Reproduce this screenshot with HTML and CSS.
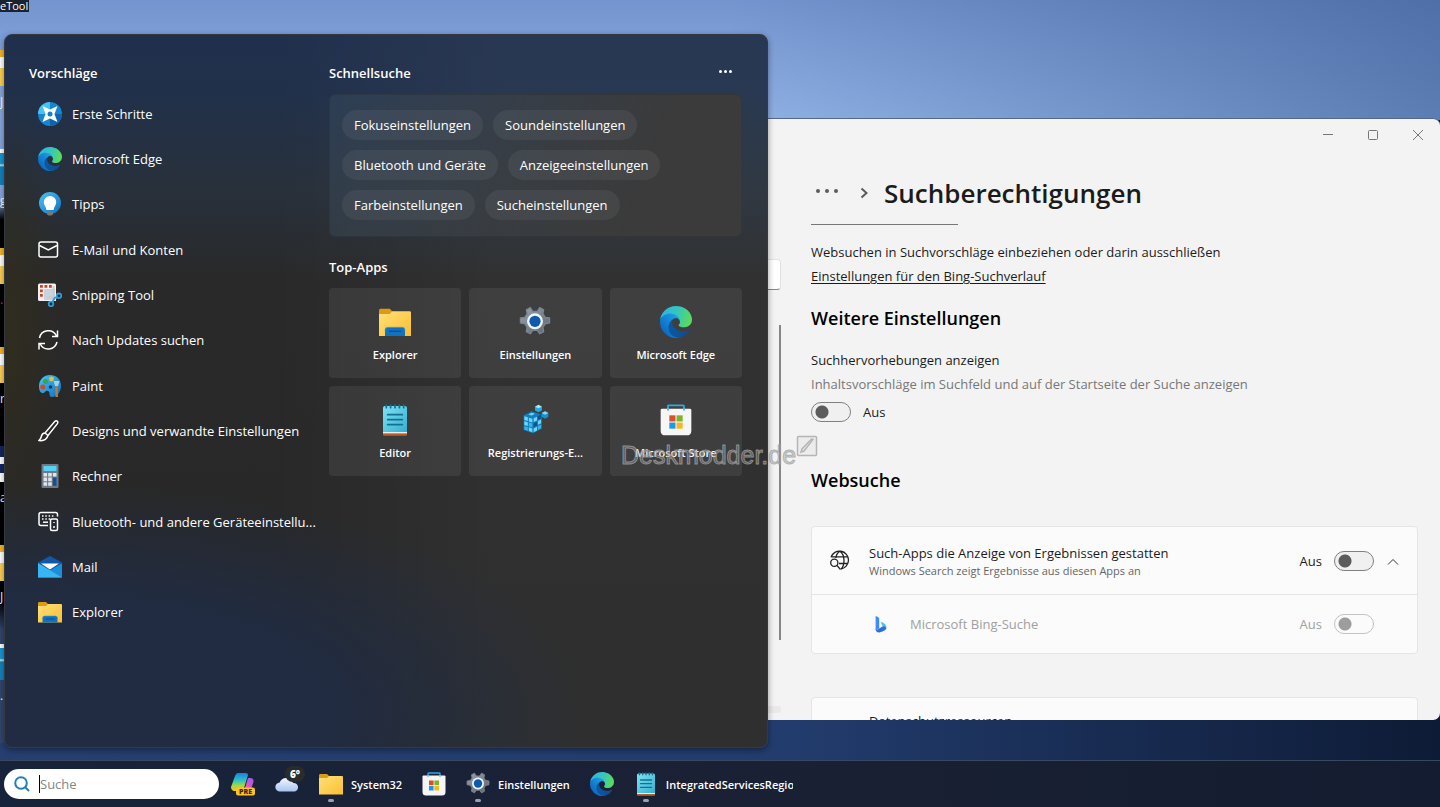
FILE: index.html
```html
<!DOCTYPE html>
<html lang="de">
<head>
  <meta charset="utf-8">
  <title>Suche</title>
  <link rel="stylesheet" href="styles.css">
</head>
<body>
  <!-- shared icons -->
  <svg class="sprite" aria-hidden="true">
    <defs>
      <linearGradient id="edge-a" x1="0" y1="0" x2="1" y2="0"><stop offset="0" stop-color="#0c59a4"/><stop offset="1" stop-color="#114a8b"/></linearGradient>
      <linearGradient id="edge-b" x1="0.9" y1="0.3" x2="0.2" y2="1"><stop offset="0" stop-color="#1b9de2"/><stop offset="0.5" stop-color="#1280d4"/><stop offset="1" stop-color="#0a5fb8"/></linearGradient>
      <linearGradient id="edge-c" x1="0" y1="0.4" x2="1" y2="0.6"><stop offset="0" stop-color="#2fb4e4"/><stop offset="0.5" stop-color="#35c6bd"/><stop offset="1" stop-color="#5fdc53"/></linearGradient>
      <linearGradient id="folder-g" x1="0" y1="0" x2="1" y2="1"><stop offset="0" stop-color="#ffe07a"/><stop offset="1" stop-color="#fcbf2f"/></linearGradient>
      <linearGradient id="blue-g" x1="0" y1="0" x2="1" y2="1"><stop offset="0" stop-color="#4bc4f5"/><stop offset="1" stop-color="#0f6fc2"/></linearGradient>
      <linearGradient id="note-g" x1="0" y1="0" x2="1" y2="1"><stop offset="0" stop-color="#7fe3f5"/><stop offset="1" stop-color="#35aed0"/></linearGradient>
      <linearGradient id="cop-a" x1="0" y1="0" x2="0" y2="1"><stop offset="0" stop-color="#1b7fe0"/><stop offset="0.4" stop-color="#2bc1c9"/><stop offset="0.7" stop-color="#a4d840"/><stop offset="1" stop-color="#fcc419"/></linearGradient>
      <linearGradient id="cop-b" x1="1" y1="0" x2="0" y2="1"><stop offset="0" stop-color="#8a5cf0"/><stop offset="0.5" stop-color="#e057c0"/><stop offset="1" stop-color="#ff8a50"/></linearGradient>
      <linearGradient id="cloud-g" x1="0" y1="0" x2="0" y2="1"><stop offset="0" stop-color="#f2f7ff"/><stop offset="1" stop-color="#a9c4f0"/></linearGradient>
      <linearGradient id="gear-g" x1="0" y1="0" x2="1" y2="1"><stop offset="0" stop-color="#9aa4ae"/><stop offset="1" stop-color="#5c6670"/></linearGradient>
    </defs>
    <symbol id="edge" viewBox="4.63 4.92 256 256">
      <path fill="url(#edge-a)" d="M235.68 195.46a93.73 93.73 0 0 1-10.54 4.71 101.87 101.87 0 0 1-35.9 6.46c-47.32 0-88.54-32.55-88.54-74.32A31.48 31.48 0 0 1 117.13 105c-42.8 1.8-53.8 46.4-53.8 72.53 0 73.88 68.09 81.37 82.76 81.37 7.91 0 19.84-2.3 27-4.56l1.31-.44a128.34 128.34 0 0 0 66.6-52.8 4 4 0 0 0-5.32-5.64z"/>
      <path fill="url(#edge-b)" d="M110.34 246.34A79.2 79.2 0 0 1 87.6 225a80.72 80.72 0 0 1 29.53-120c3.12-1.47 8.45-4.13 15.54-4a32.35 32.35 0 0 1 25.69 13 31.88 31.88 0 0 1 6.36 18.66c0-.21 24.46-79.6-80-79.6-43.9 0-80 41.66-80 78.21a130.15 130.15 0 0 0 12.11 56 128 128 0 0 0 156.38 67.11 75.55 75.55 0 0 1-62.78-8z"/>
      <path fill="url(#edge-c)" d="M156.94 153.78c-.81 1.05-3.3 2.5-3.3 5.66 0 2.61 1.7 5.12 4.72 7.23 14.38 10 41.49 8.68 41.56 8.68a59.56 59.56 0 0 0 30.27-8.35 61.38 61.38 0 0 0 30.43-52.88c.26-22.41-8-37.31-11.34-43.91C228.09 28.76 182.35 4.92 132.61 4.92a128 128 0 0 0-128 126.2c.48-36.54 36.8-66.05 80-66.05 3.5 0 23.46.34 42 10.07 16.34 8.58 24.9 18.94 30.85 29.21 6.18 10.67 7.28 24.15 7.28 29.52s-2.74 13.33-7.8 19.91z"/>
    </symbol>
    <symbol id="folder" viewBox="0 0 24 24">
      <path fill="#dd9b12" d="M0 8V3.200q0-1.200 1.200-1.200H8l2.500 2.500V8z"/>
      <path fill="url(#folder-g)" d="M0 6h8l2-2h13q1 0 1 1v17.500H0z"/>
    </symbol>
    <symbol id="explorer" viewBox="0 0 24 24">
      <use href="#folder"/>
      <path fill="#1173c0" d="M4.500 22.500V18q0-2 2-2h11q2 0 2 2v4.500z"/>
      <path stroke="#0a4f8f" d="M7.500 19h9"/>
      <path fill="none" stroke="#3b9be0" stroke-width=".6" d="M4.500 18.500q0-2.500 2-2.500h11q2 0 2 2.500"/>
    </symbol>
    <symbol id="gear" viewBox="0 0 24 24">
      <path fill="url(#gear-g)" stroke="#7b858f" stroke-linejoin="round" d="M8.500 1.200L10.200 4h3.600l1.700-2.800 3 1.600-.6 3.200 1.800 2.600 3.200.4v3.700l-3.200.6-1.800 2.700.6 3.200-3 1.600-1.700-2.600h-3.600l-1.700 2.600-3-1.600.6-3.200-1.800-2.700-3.200-.6V9l3.200-.4L6.100 6l-.6-3.200z"/>
      <circle cx="12" cy="11.500" r="6" fill="#eef4fa"/>
      <circle cx="12" cy="11.500" r="4.200" fill="#0f58b0"/>
    </symbol>
    <symbol id="store" viewBox="0 0 24 24">
      <path fill="none" stroke="#31a8e0" stroke-width="1.400" d="M6 5V1.600q0-.6.600-.6h10.800q.6 0 .6.600V5"/>
      <path fill="#f6f6f6" d="M.5 4.500q0-1 1-1h21q1 0 1 1V20q0 3.500-3.500 3.500H4Q.5 23.500.5 20z"/>
      <path fill="none" stroke="#31a8e0" stroke-width="1.200" d="M6 3.500v1.300M18 3.500v1.300"/>
      <path fill="#d9502e" d="M7 8.500h4.600v4.600H7z"/><path fill="#7db52a" d="M12.400 8.500H17v4.600h-4.600z"/>
      <path fill="#1e9be0" d="M7 13.900h4.600v4.600H7z"/><path fill="#f7b81c" d="M12.400 13.900H17v4.600h-4.600z"/>
    </symbol>
    <symbol id="notepad" viewBox="0 0 24 24">
      <path fill="#b5622a" d="M3 20h18v3q0 .8-.8.800H3.800Q3 23.800 3 23z"/>
      <path fill="#eee" d="M3 18h18v4H3z"/>
      <path fill="url(#note-g)" d="M3 3q0-1.500 1.500-1.500h15Q21 1.500 21 3v18H3z"/>
      <path stroke="#15708f" stroke-width="1.300" stroke-linecap="round" d="M6.500 8h11M6.500 11.700h11M6.500 15.400h11M5.500.8v2M8.700.8v2M12 .8v2M15.300.8v2M18.500.8v2"/>
    </symbol>
    <symbol id="regedit" viewBox="0 0 24 24">
      <path fill="#127fbd" d="M3.500 8.500l6-3 7.500 2.500v10.500l-6.500 3.500-7-2.500z"/>
      <path fill="#6fd6fa" d="M4 9.200l2.600.8v2.800L4 12zM7.400 10.300l2.600.8v2.800l-2.600-.8zM4 12.900l2.600.8v2.800l-2.600-.8zM7.400 17.500l2.600.8v2.800l-2.600-.8zM11 18.300l2.500-1.200v2.800L11 21.200zM14.200 12.800l2.400-1.200v2.800l-2.400 1.200zM11 10.700l2.500-1.200v2.800L11 13.500zM7 7.800l2.500-1.200 2.500.8-2.500 1.200z"/>
      <path fill="#39b4e8" d="M4 16.700l2.600.8v2.600L4 19.300zM7.400 13.900l2.600.8v2.800l-2.600-.8zM14.200 16.700l2.400-1.200v2.600l-2.400 1.200z"/>
      <path fill="#0a5288" d="M11 14.500l2.500-1.200v2.800L11 17.300zM14.200 9l2.400-1.200v2.800l-2.400 1.200z"/>
      <path fill="#2ca8de" d="M12 2l2.600-1.500L17.200 2v2.800l-2.600 1.300L12 4.800z"/>
      <path fill="#a3e9ff" d="M12 2l2.600-1.500L17.200 2l-2.600 1.200z"/>
      <path fill="#1b8fca" d="M17 6.800l2.600-1.300 2.400 1.300v2.700L19.500 11 17 9.500z"/>
      <path fill="#7edbfa" d="M17 6.800l2.600-1.300L22 6.800 19.500 8z"/>
    </symbol>
  </svg>

  <div class="desktop">
    <main class="workspace">
      <span class="desktop-label">eTool</span>
      <div class="desktop-icons">
        <div class="shortcut"><i class="sliver sliver-folder"></i><span>J</span></div>
        <div class="shortcut"><i class="sliver sliver-reg"></i><span>g</span></div>
        <div class="shortcut"><i class="sliver sliver-folder"></i><span class="red">.</span></div>
        <div class="shortcut"><i class="sliver sliver-folder"></i><span>r</span></div>
        <div class="shortcut"><i class="sliver sliver-navy"></i><span>a</span></div>
        <div class="shortcut"><i class="sliver sliver-folder"></i><span>J</span></div>
        <div class="shortcut"><i class="sliver sliver-reg"></i><span>.</span></div>
      </div>

      <section class="window">
        <aside class="sidebar">
          <input class="settings-search" type="text" aria-label="Einstellung suchen">
          <div class="scroll-thumb"></div>
          <div class="scroll-end"></div>
        </aside>
        <div class="content">
          <div class="titlebar">
            <button aria-label="Minimieren"><svg viewBox="0 0 10 10"><path d="M0 4.500h10"/></svg></button>
            <button aria-label="Maximieren"><svg viewBox="0 0 10 10"><rect x=".5" y=".5" width="9" height="9" rx="1"/></svg></button>
            <button aria-label="Schließen"><svg viewBox="0 0 10 10"><path d="M0 0l10 10M10 0L0 10"/></svg></button>
          </div>
          <div class="page">
            <div class="breadcrumb">
              <button class="crumb-more" aria-label="Mehr"><i></i><i></i><i></i></button>
              <svg class="crumb-arrow" viewBox="0 0 8 12"><path d="M1.500 1.500L6.500 6l-5 4.500"/></svg>
              <h1>Suchberechtigungen</h1>
            </div>
            <hr class="short-line">
            <p class="line">Websuchen in Suchvorschläge einbeziehen oder darin ausschließen</p>
            <p class="line"><a href="#">Einstellungen für den Bing-Suchverlauf</a></p>
            <h2>Weitere Einstellungen</h2>
            <label class="line block" for="highlights">Suchhervorhebungen anzeigen</label>
            <p class="line muted">Inhaltsvorschläge im Suchfeld und auf der Startseite der Suche anzeigen</p>
            <div class="toggle-row"><input class="toggle" type="checkbox" id="highlights"><span>Aus</span></div>
            <h2 class="web">Websuche</h2>
            <div class="card">
              <div class="card-row">
                <svg class="globe" viewBox="0 0 21 21"><path d="M2 7.200A9 9 0 1 1 12 19M10.800 1.200Q7 4 6.900 8M10.800 1.200Q15 4 15 10.200T12 19M2.500 6.800h16.500M10 13.500h9"/><circle cx="5.300" cy="12.800" r="3.600"/><path d="M7.900 15.400L11.500 19.500"/></svg>
                <div class="card-text">
                  <label for="apps">Such-Apps die Anzeige von Ergebnissen gestatten</label>
                  <small>Windows Search zeigt Ergebnisse aus diesen Apps an</small>
                </div>
                <span>Aus</span>
                <input class="toggle" type="checkbox" id="apps">
                <button class="expand" aria-label="Einklappen"><svg viewBox="0 0 12 8"><path d="M1 6.500l5-5 5 5"/></svg></button>
              </div>
              <div class="card-row sub">
                <svg class="bing" viewBox="0 0 14 20"><path fill="#3f8df0" d="M1 1q3.500.5 4 3v11l-4 2z"/><path fill="#4fc0f0" d="M6.500 7.500q7 2 6.500 7.500l-4.500-3z"/><path fill="#2a6ee0" d="M1 15.500q1 2 4-.5l4-2.500q3-.5 4 2.500-1 2.500-7 4.300Q1.500 20 1 15.500z"/></svg>
                <label class="card-text" for="bing">Microsoft Bing-Suche</label>
                <span>Aus</span>
                <input class="toggle" type="checkbox" id="bing" disabled>
              </div>
            </div>
            <div class="card next"><div class="card-row resources">Datenschutzressourcen</div></div>
          </div>
        </div>
      </section>

      <section class="search-panel">
        <div class="suggestions">
          <h3>Vorschläge</h3>
          <ul>
            <li><button><svg viewBox="0 0 24 24"><circle cx="12" cy="12" r="12" fill="#1687cf"/><path fill="#46c0f5" d="M12 0a12 12 0 0 0-12 12h12z"/><path fill="#0e65ad" d="M12 24a12 12 0 0 0 12-12H12z"/><path fill="#fff" d="M4.500 4L12 7.500 19.500 4 16.500 12l3 8L12 16.500 4.500 20l3-8z"/><circle cx="12" cy="12" r="2.500" fill="#1580c8"/></svg>Erste Schritte</button></li>
            <li><button><svg><use href="#edge"/></svg>Microsoft Edge</button></li>
            <li><button><svg viewBox="0 0 24 24"><circle cx="12" cy="11" r="11" fill="url(#blue-g)"/><path fill="#fff" d="M12 4a6.200 6.200 0 0 1 6.200 6.200c0 3-2.200 4.300-2.700 7.800h-7c-.5-3.500-2.700-4.800-2.700-7.800A6.200 6.200 0 0 1 12 4z"/><path fill="#777" d="M9 19h6v2.500q0 2-3 2t-3-2z"/></svg>Tipps</button></li>
            <li><button><svg class="line-icon" viewBox="0 0 24 24"><rect x="1" y="4" width="18.500" height="15" rx="2"/><path d="M1.500 7.500l8.800 4.500L19 7.500"/></svg>E-Mail und Konten</button></li>
            <li><button><svg viewBox="0 0 24 24"><path fill="#f2f2f2" d="M0 2Q0 .5 1.500.5h15Q18 .5 18 2v16H1.500Q0 18 0 16.500z"/><path fill="#c9d3dc" d="M6 6h11v11H6z"/><path fill="#cf3f25" d="M2 2h2.800v2.800H2zM6.500 2h2.800v2.800H6.500zM11 2h2.800v2.800H11zM2 6.500h2.800v2.800H2zM2 11h2.800v2.800H2z"/><path stroke="#c8ccd0" stroke-width="1.800" d="M15.500 3v13M9 14.500h10"/><g fill="none" stroke="#2d9be0" stroke-width="1.800"><circle cx="13" cy="21" r="2.300"/><circle cx="21" cy="12.800" r="2.300"/><path d="M14.500 19l2-4 2.700-1"/></g></svg>Snipping Tool</button></li>
            <li><button><svg class="line-icon" viewBox="0 0 24 24"><path d="M1.500 10A9 9 0 0 1 18.500 8M19.500 2.500V8.500H14M19 14A9 9 0 0 1 2.200 16M1 21.500v-6H7"/></svg>Nach Updates suchen</button></li>
            <li><button><svg viewBox="0 0 24 24"><path fill="url(#blue-g)" d="M12 1c6 0 11 4 11 10.500S19 23 14 23c-4 0-1-5-4-6s-3 3-6 2c-2.500-1-3-4-3-7C1 5.500 6 1 12 1z"/><circle cx="4.700" cy="13" r="2.500" fill="#c84d28"/><circle cx="7.500" cy="7.500" r="2.500" fill="#3da345"/><circle cx="13.500" cy="5" r="2.400" fill="#e8c22e"/><circle cx="12.500" cy="13" r="1.800" fill="#0d3c66"/><path fill="#9ad4e8" d="M15.500 7h6l-1.500 5h-3z"/><path fill="#b9793a" d="M17.300 12h2.400l.3 11h-2.500z"/></svg>Paint</button></li>
            <li><button><svg class="line-icon" viewBox="0 0 24 24"><path d="M7 14L16.500 2.800q1.500-1.600 2.700-.6t0 2.700L10 16.500zM7 14q-3 .3-3.500 3T1 21.500q7 1 9-5"/></svg>Designs und verwandte Einstellungen</button></li>
            <li><button><svg viewBox="0 0 24 24"><rect x="3.500" width="17" height="24" rx="1" fill="#6c7a89"/><path fill="#5bd0f2" d="M5.500 2h13v5h-13z"/><path fill="#dfe5ea" d="M5.500 9h3.600v3.600H5.500zM10.200 9h3.600v3.600h-3.600zM14.900 9h3.600v3.600h-3.600zM5.500 13.600h3.600v3.600H5.500zM10.200 13.600h3.600v3.600h-3.600zM5.500 18.200h3.600v3.600H5.500zM10.200 18.200h3.600v3.600h-3.600z"/><path fill="#164f92" d="M14.900 13.600h3.600v8.200h-3.600z"/></svg>Rechner</button></li>
            <li><button><svg class="line-icon" viewBox="0 0 24 24"><path d="M10 15.500H3q-2 0-2-2v-9q0-2 2-2h14.500q2 0 2 2v2"/><path stroke-dasharray="1.500 1.800" d="M4 6h13M4 9h10"/><path d="M5 12.200h5"/><rect x="12.500" y="9" width="7" height="11.500" rx="1.500"/><path d="M16 12v1M15 17h2"/></svg>Bluetooth- und andere Geräteeinstellu...</button></li>
            <li><button><svg viewBox="0 0 24 24"><path fill="#1159a8" d="M0 7.500L12 1l12 6.500-12 9z"/><path fill="#1a8edb" d="M0 8l12 7.500L24 8v14.500H0z"/><path fill="#38b6f2" d="M0 8l24 14.500H0z"/><path fill="#fff" d="M3 8.500h18l-9 6z"/></svg>Mail</button></li>
            <li><button><svg><use href="#explorer"/></svg>Explorer</button></li>
          </ul>
        </div>
        <div class="quick">
          <div class="quick-head"><h3>Schnellsuche</h3><button class="more" aria-label="Optionen"><i></i><i></i><i></i></button></div>
          <div class="chips">
            <div><button>Fokuseinstellungen</button><button>Soundeinstellungen</button></div>
            <div><button>Bluetooth und Geräte</button><button>Anzeigeeinstellungen</button></div>
            <div><button>Farbeinstellungen</button><button>Sucheinstellungen</button></div>
          </div>
          <h3 class="top-title">Top-Apps</h3>
          <div class="tiles">
            <button><svg><use href="#explorer"/></svg>Explorer</button>
            <button><svg><use href="#gear"/></svg>Einstellungen</button>
            <button><svg><use href="#edge"/></svg>Microsoft Edge</button>
            <button><svg><use href="#notepad"/></svg>Editor</button>
            <button><svg><use href="#regedit"/></svg>Registrierungs-E...</button>
            <button><svg><use href="#store"/></svg>Microsoft Store</button>
          </div>
        </div>
      </section>

      <div class="watermark">
        <span>Deskmodder.de</span>
        <svg viewBox="0 0 22 22"><rect x="1.500" y="1.500" width="19" height="19" rx="1"/><path d="M5 17l3-1 9-11.500-1.500-.5L6 14z"/></svg>
      </div>
    </main>

    <footer class="taskbar">
      <label class="search-box">
        <svg viewBox="0 0 16 16"><circle cx="7" cy="7" r="5.800"/><path d="M11.300 11.300L15 15"/></svg>
        <span class="caret"></span>
        <input type="text" placeholder="Suche" aria-label="Suche">
      </label>
      <button aria-label="Copilot"><svg viewBox="0 0 24 24"><path fill="url(#cop-a)" d="M7 1h8q2 0 2 2l-4 13q-1 3-4 3H3q-3-1-3-4L4 4q1-3 3-3z"/><path fill="url(#cop-b)" d="M17 6h3q3 .5 2.500 4L20 17q-1 3-4 3h-5q2-.5 3-4z"/><rect x="5" y="15.500" width="19" height="8" rx="2" fill="#fcc12c"/><text x="14.500" y="22.300">PRE</text></svg></button>
      <button class="weather" aria-label="Wetter"><svg viewBox="0 0 24 24"><path fill="url(#cloud-g)" d="M5 19.500a4.500 4.500 0 0 1-.3-9A7 7 0 0 1 18 11a4.300 4.300 0 0 1 1.500 8.500z"/></svg><b>6°</b></button>
      <button class="open"><svg><use href="#folder"/></svg><span>System32</span></button>
      <button aria-label="Microsoft Store"><svg><use href="#store"/></svg></button>
      <button class="open"><svg><use href="#gear"/></svg><span>Einstellungen</span></button>
      <button aria-label="Microsoft Edge"><svg><use href="#edge"/></svg></button>
      <button class="open"><svg><use href="#notepad"/></svg><span class="clip">IntegratedServicesRegionPolicySet</span></button>
    </footer>
  </div>
</body>
</html>
```

FILE: styles.css
```css
* {
  box-sizing: border-box;
}
body {
  margin: 0;
  font-family: "Open Sans", "Noto Sans", sans-serif;
  font-size: 13px;
  color: #1b1b1b;
}
h1, h2, h3, p, ul {
  margin: 0;
  padding: 0;
}
h1, h2, h3 {
  font-weight: 600;
}
ul {
  list-style: none;
}
button {
  font: inherit;
  color: inherit;
  background: none;
  border: 0;
  padding: 0;
}
.sprite {
  position: absolute;
  width: 0;
  height: 0;
}

.desktop {
  height: 100vh;
  display: flex;
  flex-direction: column;
  overflow: hidden;
  background:
    linear-gradient(100deg, transparent 50%, rgba(38, 72, 128, .5)) top / 100% 120px no-repeat,
    linear-gradient(#7494cf, #92b3e6) top / 100% 120px no-repeat,
    linear-gradient(90deg, #263f70 0, #223c6d 55%, #0e1b36 100%);
}
.workspace {
  position: relative;
  flex: 1;
}

/* icons on the desktop, mostly behind the search panel */
.desktop-label {
  position: absolute;
  top: 0;
  left: 0;
  padding-right: 1px;
  font-size: 11px;
  line-height: 12px;
  color: #fff;
  background: #1b2230;
}
.desktop-icons {
  position: absolute;
  top: 50px;
  left: 0;
  width: 4px;
  overflow: hidden;
  background: linear-gradient(#86a6dd 0, #86a6dd 150px, #000 170px, #000 550px, #33466f 580px, #33466f 100%);
}
.shortcut {
  height: 99px;
  color: #fff;
  font-size: 12px;
  line-height: 16px;
}
.sliver {
  display: block;
  height: 36px;
  margin-bottom: 8px;
}
.sliver-folder {
  background: linear-gradient(#f3b32c 20%, #fff 20%, #fff 50%, #fbcf56 50%);
}
.sliver-reg {
  background: linear-gradient(#fff 10%, #1a95cf 10%, #1a95cf 40%, #bfe9fb 45%, #1382bd 50%);
}
.sliver-navy {
  background: linear-gradient(#16245a 30%, #fff 30%, #fff 50%, #16245a 50%, #16245a 75%, #fff 75%);
}
.red {
  color: #e03030;
}

/* settings window */
.window {
  position: absolute;
  top: 118px;
  right: 0;
  bottom: 40px;
  left: 380px;
  display: flex;
  overflow: hidden;
  background: #f3f3f3;
  border-top: 1px solid #55688a;
  border-radius: 7px;
}
.sidebar {
  width: 401px;
  display: flex;
  flex-direction: column;
  align-items: flex-end;
  padding-top: 140px;
}
.settings-search {
  width: 360px;
  height: 31px;
  border: 1px solid #e2e2e2;
  border-bottom-color: #868686;
  border-radius: 4px;
  background: #fff;
}
.scroll-thumb {
  width: 2px;
  height: 315px;
  margin-top: 35px;
  background: #868686;
}
.scroll-end {
  width: 40px;
  height: 7px;
  margin-top: 66px;
  border-radius: 3px;
  background: #e9e9e9;
}
.content {
  flex: 1;
  min-width: 0;
}
.titlebar {
  display: flex;
  justify-content: flex-end;
  height: 32px;
}
.titlebar button {
  width: 45px;
  display: flex;
  align-items: center;
  justify-content: center;
}
.titlebar svg {
  width: 10px;
  height: 10px;
  fill: none;
  stroke: #777;
}
.page {
  padding: 18px 22px 0 30px;
}
.breadcrumb {
  display: flex;
  align-items: center;
  height: 48px;
}
.crumb-more {
  display: flex;
  gap: 5px;
  padding: 0 0 4px 5px;
}
.crumb-more i {
  width: 4px;
  height: 4px;
  border-radius: 50%;
  background: #5c5c5c;
}
.crumb-arrow {
  width: 8px;
  height: 12px;
  margin: 0 16px 0 22px;
  fill: none;
  stroke: #5c5c5c;
  stroke-width: 2;
}
h1 {
  font-size: 26px;
  line-height: 48px;
}
.short-line {
  width: 147px;
  height: 1px;
  margin: 7px 0 15px;
  border: 0;
  background: #777;
}
.line {
  line-height: 24px;
}
.block {
  display: block;
}
.line a {
  color: inherit;
  text-underline-offset: 2px;
}
.muted {
  color: #777;
}
h2 {
  margin: 16px 0;
  font-size: 18px;
  line-height: 28px;
  color: #000;
}
.web {
  margin: 44px 0 32px;
}
.toggle-row {
  display: flex;
  align-items: center;
  gap: 12px;
  height: 20px;
  margin-top: 6px;
}
.toggle {
  appearance: none;
  width: 40px;
  height: 20px;
  margin: 0;
  border: 1px solid #808080;
  border-radius: 10px;
  background: radial-gradient(circle at 10px 9px, #5c5c5c 6px, transparent 7px) #f0f0f0;
}
.toggle:disabled {
  border-color: #c3c3c3;
  background: radial-gradient(circle at 10px 9px, #9d9d9d 6px, transparent 7px) #fbfbfb;
}
.card {
  border: 1px solid #e5e5e5;
  border-radius: 4px;
  background: #fbfbfb;
}
.card-row {
  display: flex;
  align-items: center;
  gap: 12px;
  height: 67px;
  padding: 0 17px;
}
.card-row.sub {
  height: 59px;
  padding: 0 43px 0 62px;
  border-top: 1px solid #e5e5e5;
  color: #a0a0a0;
}
.card-text {
  flex: 1;
  display: flex;
  flex-direction: column;
}
.card-text label {
  line-height: 20px;
}
.card-text small {
  font-size: 11px;
  line-height: 15px;
  color: #666;
}
.globe {
  width: 21px;
  height: 21px;
  margin-right: 7px;
  fill: none;
  stroke: #222;
  stroke-width: 1.300;
}
.bing {
  width: 14px;
  height: 18px;
  margin-right: 10px;
}
.expand {
  width: 14px;
  height: 20px;
}
.expand svg {
  width: 12px;
  fill: none;
  stroke: #333;
}
.next {
  margin-top: 43px;
}
.resources {
  height: 46px;
  padding-left: 57px;
}

/* search flyout */
.search-panel {
  position: absolute;
  top: 34px;
  bottom: 12px;
  left: 4px;
  width: 764px;
  display: flex;
  padding: 26px 25px 26px 24px;
  border: 1px solid #353a42;
  border-radius: 8px;
  box-shadow: 0 2px 6px rgba(0, 0, 0, .4);
  color: #fff;
  background:
    radial-gradient(ellipse 520px 230px at 60px 680px, #212c42 50%, transparent),
    radial-gradient(ellipse 60px 220px at 0 300px, #302c1e, transparent),
    linear-gradient(90deg, transparent 35%, rgba(255, 255, 255, .04) 65%),
    linear-gradient(#202f4c 0, #21304a 8%, #28303a 22%, #29292a 34%, #272727);
}
h3 {
  font-size: 13px;
  line-height: 24px;
}
.suggestions {
  width: 300px;
}
.suggestions ul {
  display: grid;
  grid-template-rows: repeat(12, 1fr);
  height: 544px;
  margin-top: 6px;
}
.suggestions li {
  display: flex;
}
.suggestions button {
  display: flex;
  align-items: center;
  gap: 10px;
  padding-left: 9px;
  white-space: nowrap;
}
.suggestions svg {
  width: 24px;
  height: 24px;
}
.line-icon {
  fill: none;
  stroke: #fff;
  stroke-width: 1.500;
}
.quick {
  flex: 1;
}
.quick-head {
  display: flex;
  align-items: center;
  justify-content: space-between;
}
.more {
  display: flex;
  gap: 2px;
  padding: 0 10px 3px 0;
}
.more i {
  width: 3px;
  height: 3px;
  border-radius: 50%;
  background: #fff;
}
.chips {
  display: flex;
  flex-direction: column;
  gap: 10px;
  height: 143px;
  margin-top: 9px;
  padding: 15px 12px;
  border: 1px solid rgba(0, 0, 0, .1);
  border-radius: 6px;
  background: linear-gradient(110deg, rgba(60, 80, 100, .4), #3b3b3b 75%);
}
.chips div {
  display: flex;
  gap: 10px;
}
.chips button {
  height: 30px;
  padding: 0 12px;
  border-radius: 15px;
  background: rgba(255, 255, 255, .06);
}
.top-title {
  margin: 18px 0 9px;
}
.tiles {
  display: grid;
  grid-template-columns: repeat(3, 1fr);
  gap: 8px;
}
.tiles button {
  display: flex;
  flex-direction: column;
  align-items: center;
  gap: 9px;
  height: 90px;
  padding-top: 18px;
  border-radius: 4px;
  background: rgba(255, 255, 255, .07);
  font-size: 11px;
  font-weight: 600;
}
.tiles svg {
  width: 32px;
  height: 32px;
}

.watermark {
  position: absolute;
  top: 432px;
  left: 621px;
  display: flex;
  align-items: flex-start;
  color: rgba(150, 150, 150, .35);
  font: 25px/46px "Liberation Sans", sans-serif;
  -webkit-text-stroke: 1px rgba(160, 160, 160, .8);
}
.watermark svg {
  width: 22px;
  height: 22px;
  margin-top: 3px;
  fill: rgba(230, 230, 230, .5);
  stroke: #b5b5b5;
  stroke-width: 1.500;
}

.taskbar {
  display: flex;
  align-items: center;
  gap: 20px;
  height: 47px;
  padding-left: 4px;
  border-top: 1px solid #39475f;
  background: linear-gradient(90deg, #17233a, #1b2135 50%, #131c30);
  color: #fff;
  font-size: 11px;
  font-weight: 600;
}
.taskbar button {
  position: relative;
  display: flex;
  align-items: center;
  gap: 8px;
  height: 46px;
}
.taskbar button svg {
  width: 24px;
  height: 24px;
}
.taskbar text {
  font-size: 7px;
  font-weight: 800;
  text-anchor: middle;
  fill: #3a2a00;
}
.search-box {
  display: flex;
  align-items: center;
  width: 215px;
  height: 30px;
  margin-right: -8px;
  padding: 0 10px;
  border-radius: 15px;
  background: #fff;
}
.search-box svg {
  width: 16px;
  height: 16px;
  margin-right: 9px;
  fill: none;
  stroke: #1f80b8;
  stroke-width: 2;
}
.caret {
  width: 1px;
  height: 18px;
  background: #000;
}
.search-box input {
  flex: 1;
  min-width: 0;
  padding: 0;
  border: 0;
  outline: 0;
  background: none;
  font: 13px "Open Sans", "Noto Sans", sans-serif;
}
.search-box input::placeholder {
  color: #858585;
}
.weather b {
  position: absolute;
  top: 5px;
  right: -6px;
  padding: 0 5px;
  border-radius: 8px;
  background: #2b2b2b;
  font-size: 10px;
  line-height: 16px;
}
.open::after {
  content: "";
  position: absolute;
  bottom: 5px;
  left: 9px;
  width: 6px;
  height: 3px;
  border-radius: 2px;
  background: #9aa1ae;
}
.clip {
  width: 127px;
  overflow: hidden;
  white-space: nowrap;
}
```
